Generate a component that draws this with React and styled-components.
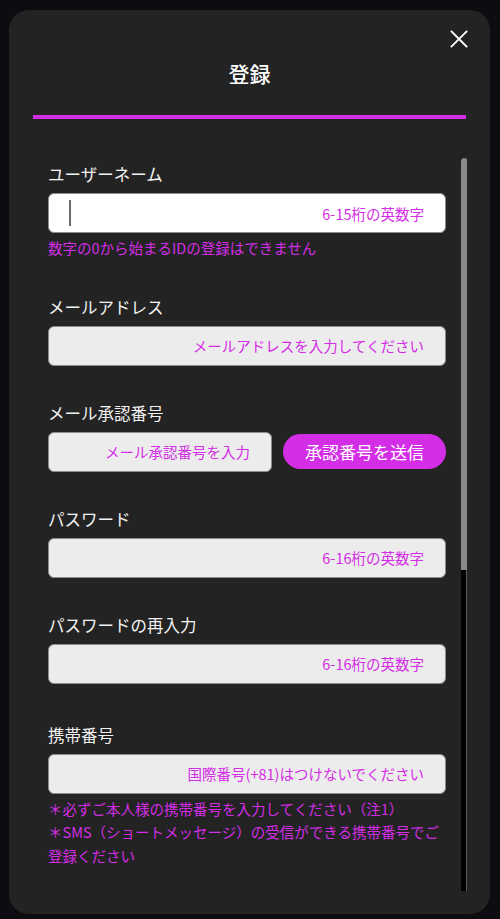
import styled, { createGlobalStyle } from "styled-components";

//REGISTRATION MODAL (SIGN UP FORM)

const GlobalStyle = createGlobalStyle`
  html, body {
    margin: 0;
    padding: 0;
    background: #0d0d11;
  }
  body {
    font-family: "Noto Sans CJK JP", "Noto Sans", sans-serif;
  }
  * {
    box-sizing: border-box;
  }
`;

const PURPLE = "#d42de6";

const fields = [
  { label: "ユーザーネーム", hint: "6-15桁の英数字", active: true, note: ["数字の0から始まるIDの登録はできません"] },
  { label: "メールアドレス", hint: "メールアドレスを入力してください" },
  { label: "メール承認番号", hint: "メール承認番号を入力", button: "承認番号を送信" },
  { label: "パスワード", hint: "6-16桁の英数字", type: "password" },
  { label: "パスワードの再入力", hint: "6-16桁の英数字", type: "password", space: 40 },
  {
    label: "携帯番号",
    hint: "国際番号(+81)はつけないでください",
    note: [
      "＊必ずご本人様の携帯番号を入力してください（注1）",
      "＊SMS（ショートメッセージ）の受信ができる携帯番号でご\n登録ください",
    ],
  },
];

const CloseIcon = () => (
  <svg width="18" height="18" viewBox="0 0 18 18" fill="none">
    <path d="M1.5 1.5L16.5 16.5M16.5 1.5L1.5 16.5" stroke="#fff" strokeWidth="1.8" strokeLinecap="square" />
  </svg>
);

const App = () => {
  return (
    <>
      <GlobalStyle />
      <Modal>
        <Header>
          <Title>登録</Title>
          <CloseButton aria-label="閉じる">
            <CloseIcon />
          </CloseButton>
        </Header>
        <Divider />
        <Body>
          <Scroller>
            {fields.map((f) => (
              <Field key={f.label} $space={f.space}>
                <Label>{f.label}</Label>
                <InputRow>
                  <InputBox $active={f.active}>
                    {f.active && <Caret />}
                    <Input type={f.type || "text"} placeholder={f.hint} />
                  </InputBox>
                  {f.button && <SendButton>{f.button}</SendButton>}
                </InputRow>
                {f.note && (
                  <Notes>
                    {f.note.map((n) => (
                      <Note key={n}>{n}</Note>
                    ))}
                  </Notes>
                )}
              </Field>
            ))}
          </Scroller>
          <ScrollTrack>
            <ScrollThumb />
          </ScrollTrack>
        </Body>
      </Modal>
    </>
  );
};

const Modal = styled.div`
  position: relative;
  margin: 10px 10px 0 9px;
  width: 481px;
  height: 904px;
  background: #232323;
  border-radius: 20px;
  display: flex;
  flex-direction: column;
  padding-bottom: 23px;
`;

const Header = styled.div`
  flex-shrink: 0;
  height: 105px;
  display: flex;
  align-items: flex-end;
  justify-content: center;
  padding-bottom: 28px;
`;

const Title = styled.h1`
  margin: 0;
  font-size: 21px;
  line-height: 28px;
  font-weight: 500;
  color: #ffffff;
`;

const CloseButton = styled.button`
  position: absolute;
  top: 20px;
  right: 22px;
  width: 18px;
  height: 18px;
  padding: 0;
  border: none;
  background: none;
  display: flex;
  cursor: pointer;
`;

const Divider = styled.div`
  flex-shrink: 0;
  height: 4px;
  margin: 0 24px;
  background: ${PURPLE};
`;

const Body = styled.div`
  flex: 1;
  min-height: 0;
  display: flex;
  margin: 39px 23px 0 24px;
`;

const Scroller = styled.div`
  flex: 1;
  min-width: 0;
  padding: 5px 15px 0 15px;
  overflow: hidden;
`;

const ScrollTrack = styled.div`
  width: 6px;
  background: #000;
  box-shadow: inset -1px 0 0 #5a5a5a;
  display: flex;
  flex-direction: column;
`;

const ScrollThumb = styled.div`
  height: 412px;
  background: #8a8a8a;
  border-radius: 3px 3px 1px 1px;
`;

const Field = styled.div`
  display: flex;
  flex-direction: column;
  margin-bottom: ${(p) => p.$space || 36}px;
`;

const Label = styled.div`
  font-size: 16.5px;
  line-height: 22px;
  color: #f2f2f2;
  margin-bottom: 8px;
`;

const InputRow = styled.div`
  display: flex;
  align-items: center;
  gap: 11px;
`;

const InputBox = styled.div`
  flex: 1;
  height: 40px;
  display: flex;
  align-items: center;
  background: ${(p) => (p.$active ? "#ffffff" : "#ececec")};
  border: 1.5px solid #8c8c8c;
  border-radius: 6px;
  padding: 0 19px 0 20px;
`;

const Caret = styled.span`
  width: 2px;
  height: 26px;
  background: #6a6a6a;
`;

const Input = styled.input`
  flex: 1;
  min-width: 0;
  height: 100%;
  border: none;
  outline: none;
  background: transparent;
  text-align: right;
  font-family: inherit;
  font-size: 14.5px;
  color: #333;

  &::placeholder {
    color: ${PURPLE};
    opacity: 1;
  }
`;

const SendButton = styled.button`
  width: 163px;
  height: 35px;
  border: none;
  border-radius: 18px;
  background: ${PURPLE};
  color: #ffffff;
  font-family: inherit;
  font-size: 17px;
  cursor: pointer;
`;

const Notes = styled.div`
  margin-top: 3px;
`;

const Note = styled.div`
  font-size: 14.5px;
  line-height: 23.5px;
  color: ${PURPLE};
  white-space: pre-line;
`;

export default App;
